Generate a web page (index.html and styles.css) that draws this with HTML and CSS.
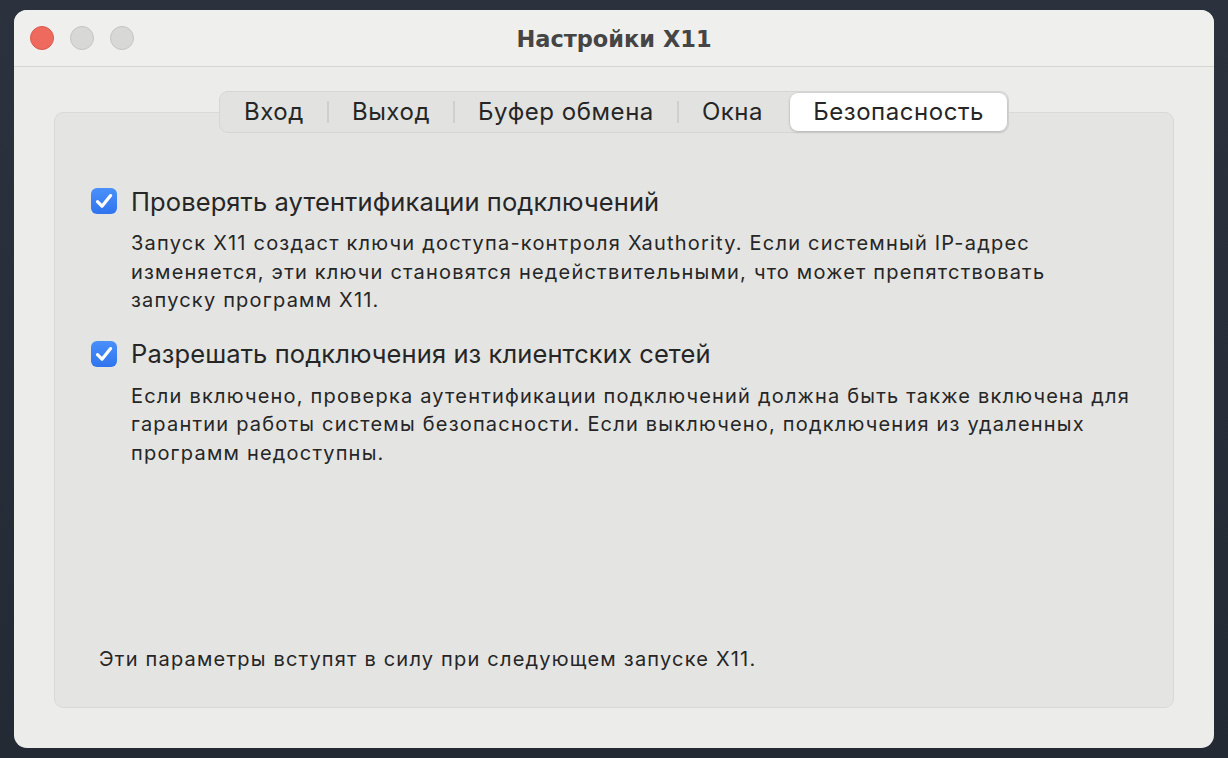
FILE: index.html
```html
<!DOCTYPE html>
<html lang="ru">
<head>
<meta charset="utf-8">
<title>Настройки X11</title>
<link rel="stylesheet" href="styles.css">
</head>
<body>
<div class="window">
  <div class="titlebar">
    <div class="lights">
      <span class="light red"></span>
      <span class="light gray"></span>
      <span class="light gray"></span>
    </div>
    <div class="title">Настройки X11</div>
  </div>
  <div class="content">
    <div class="tabs">
      <div class="tab">Вход</div>
      <div class="sep"></div>
      <div class="tab">Выход</div>
      <div class="sep"></div>
      <div class="tab">Буфер обмена</div>
      <div class="sep"></div>
      <div class="tab">Окна</div>
      <div class="tab selected">Безопасность</div>
    </div>
    <div class="panel">
      <div class="option">
        <div class="row">
          <svg class="check" width="26" height="26" viewBox="0 0 26 26"><defs><linearGradient id="g1" x1="0" y1="0" x2="0" y2="1"><stop offset="0" stop-color="#4a90fa"/><stop offset="1" stop-color="#2f74ee"/></linearGradient></defs><rect x="0" y="0" width="26" height="26" rx="6" fill="url(#g1)"/><path d="M6.5 13.6 L11 18.2 L19.6 7.6" fill="none" stroke="#fff" stroke-width="3.2" stroke-linecap="round" stroke-linejoin="round"/></svg>
          <span class="label">Проверять аутентификации подключений</span>
        </div>
        <p class="desc">Запуск X11 создаст ключи доступа-контроля Xauthority. Если системный IP-адрес<br>изменяется, эти ключи становятся недействительными, что может препятствовать<br>запуску программ X11.</p>
      </div>
      <div class="option">
        <div class="row">
          <svg class="check" width="26" height="26" viewBox="0 0 26 26"><defs><linearGradient id="g2" x1="0" y1="0" x2="0" y2="1"><stop offset="0" stop-color="#4a90fa"/><stop offset="1" stop-color="#2f74ee"/></linearGradient></defs><rect x="0" y="0" width="26" height="26" rx="6" fill="url(#g2)"/><path d="M6.5 13.6 L11 18.2 L19.6 7.6" fill="none" stroke="#fff" stroke-width="3.2" stroke-linecap="round" stroke-linejoin="round"/></svg>
          <span class="label">Разрешать подключения из клиентских сетей</span>
        </div>
        <p class="desc">Если включено, проверка аутентификации подключений должна быть также включена для<br>гарантии работы системы безопасности. Если выключено, подключения из удаленных<br>программ недоступны.</p>
      </div>
      <div class="spacer"></div>
      <p class="footer">Эти параметры вступят в силу при следующем запуске X11.</p>
    </div>
  </div>
</div>
</body>
</html>
```
FILE: styles.css
```css
* { box-sizing: border-box; }
html, body { margin: 0; padding: 0; }
body {
  width: 1228px;
  height: 758px;
  background: linear-gradient(180deg, #2b323d 0%, #232a34 100%);
  font-family: Inter, "Noto Sans", sans-serif;
  color: #262626;
  padding: 10px 14px;
  overflow: hidden;
}
.window {
  width: 1200px;
  height: 738px;
  border-radius: 13px;
  background: #ececea;
  overflow: hidden;
  display: flex;
  flex-direction: column;
}
.titlebar {
  height: 57px;
  flex: none;
  background: #efefed;
  border-bottom: 1px solid #d3d3d1;
  display: flex;
  align-items: center;
  justify-content: center;
  position: relative;
}
.lights {
  position: absolute;
  left: 16px;
  top: 16px;
  display: flex;
  gap: 16px;
}
.light {
  width: 24px;
  height: 24px;
  border-radius: 50%;
}
.light.red { background: #ee6a5f; border: 1px solid #d9594f; }
.light.gray { background: #d8d8d6; border: 1px solid #c4c4c2; }
.title {
  font-family: "DejaVu Sans", Inter, sans-serif;
  font-size: 22.5px;
  font-weight: 700;
  color: #454545;
  margin-top: 1px;
}
.content {
  flex: 1;
  padding: 24px 40px 40px 40px;
  display: flex;
  flex-direction: column;
  align-items: center;
}
.tabs {
  position: relative;
  z-index: 1;
  height: 42px;
  display: flex;
  align-items: center;
  background: #e2e2e0;
  border: 1px solid #d6d6d4;
  border-radius: 9px;
  padding: 1px;
}
.tab {
  font-size: 24px;
  letter-spacing: 0.55px;
  padding: 0 23px;
  height: 38px;
  line-height: 38px;
  color: #262626;
}
.tab.selected {
  background: #ffffff;
  border-radius: 8px;
  box-shadow: 0 1px 3px rgba(0,0,0,0.18), 0 0 0 0.5px rgba(0,0,0,0.08);
  margin-left: 4px;
}
.sep {
  width: 2px;
  height: 22px;
  background: #cfcfcd;
}
.panel {
  align-self: stretch;
  flex: 1;
  margin-top: -21px;
  background: #e4e4e2;
  border: 1px solid #d9d9d7;
  border-radius: 9px;
  padding: 74px 36px 34px 36px;
  display: flex;
  flex-direction: column;
}
.option { margin-bottom: 25px; }
.row {
  display: flex;
  align-items: center;
  gap: 14px;
  height: 28px;
}
.check { flex: none; }
.label {
  font-size: 25.5px;
  letter-spacing: 0.1px;
  color: #262626;
}
.desc {
  margin: 14px 0 0 40px;
  font-size: 20px;
  letter-spacing: 1.2px;
  line-height: 28.5px;
  color: #262626;
}
.spacer { flex: 1; }
.footer {
  margin: 0 0 0 8px;
  font-size: 20px;
  letter-spacing: 1.2px;
  line-height: 28px;
  color: #262626;
}
```
